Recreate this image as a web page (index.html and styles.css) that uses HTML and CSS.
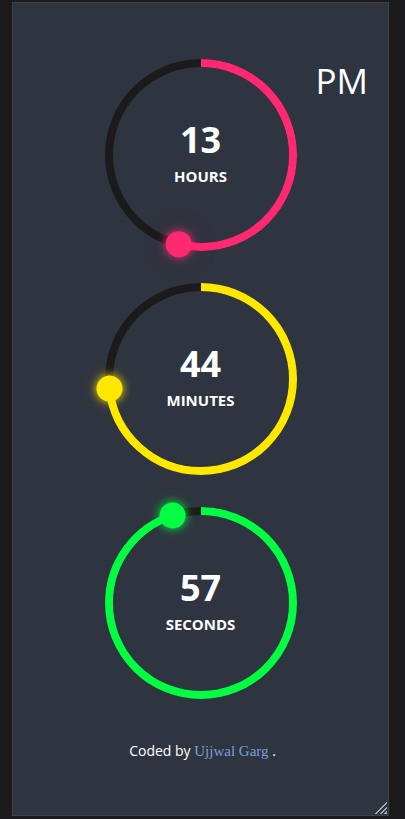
FILE: index.html
```html
<!DOCTYPE html>
<html lang="en">
<head>
<meta charset="utf-8">
<title>Clock</title>
<link rel="stylesheet" href="styles.css">
</head>
<body>
<div class="panel">
  <div class="ampm">PM</div>
  <div class="dial hours">
    <svg class="ring" viewBox="0 0 192 192" width="192" height="192">
      <circle class="track" cx="96" cy="96" r="92"></circle>
      <circle class="bar" cx="96" cy="96" r="92" style="stroke-dasharray: 311.5 578.05"></circle>
    </svg>
    <div class="dot-wrap" style="transform: rotate(194deg)"><span class="dot"></span></div>
    <div class="readout">
      <div class="num">13</div>
      <div class="label">HOURS</div>
    </div>
  </div>
  <div class="dial minutes">
    <svg class="ring" viewBox="0 0 192 192" width="192" height="192">
      <circle class="track" cx="96" cy="96" r="92"></circle>
      <circle class="bar" cx="96" cy="96" r="92" style="stroke-dasharray: 423.9 578.05"></circle>
    </svg>
    <div class="dot-wrap" style="transform: rotate(264deg)"><span class="dot"></span></div>
    <div class="readout">
      <div class="num">44</div>
      <div class="label">MINUTES</div>
    </div>
  </div>
  <div class="dial seconds">
    <svg class="ring" viewBox="0 0 192 192" width="192" height="192">
      <circle class="track" cx="96" cy="96" r="92"></circle>
      <circle class="bar" cx="96" cy="96" r="92" style="stroke-dasharray: 549.1 578.05"></circle>
    </svg>
    <div class="dot-wrap" style="transform: rotate(342deg)"><span class="dot"></span></div>
    <div class="readout">
      <div class="num">57</div>
      <div class="label">SECONDS</div>
    </div>
  </div>
  <p class="credit">Coded by <a href="#">Ujjwal Garg</a> .</p>
  <span class="grip"></span>
</div>
</body>
</html>
```

FILE: styles.css
```css
html, body {
  margin: 0;
  padding: 0;
  background: #1b1b1d;
}

body {
  padding: 2px 0 0 12px;
  font-family: "Open Sans", "Noto Sans", sans-serif;
  color: #ffffff;
}

.panel {
  position: relative;
  box-sizing: border-box;
  width: 377px;
  height: 814px;
  background: #2f3540;
  border: 1px solid #3d4148;
  overflow: hidden;
  display: flex;
  flex-direction: column;
  align-items: center;
  padding-top: 56px;
  gap: 32px;
}

.grip {
  position: absolute;
  right: 1px;
  bottom: 1px;
  width: 13px;
  height: 13px;
  background: linear-gradient(135deg,
    transparent 0 52%,
    #a9abb0 52% 60%,
    transparent 60% 70%,
    #a9abb0 70% 78%,
    transparent 78% 88%,
    #a9abb0 88% 100%);
}

.ampm {
  position: absolute;
  top: 56px;
  right: 20px;
  font-size: 35px;
  line-height: 44px;
  font-weight: 400;
  color: #ffffff;
}

.dial {
  position: relative;
  width: 192px;
  height: 192px;
  flex: none;
}

.hours { --clr: #ff2972; --glow: rgba(255, 41, 114, 0.10); }
.minutes { --clr: #fee800; --glow: rgba(254, 232, 0, 0.08); }
.seconds { --clr: #04fc43; --glow: rgba(4, 252, 67, 0.08); }

.ring {
  display: block;
  transform: rotate(-90deg);
}

.track {
  fill: none;
  stroke: #1b1b1b;
  stroke-width: 8;
}

.bar {
  fill: none;
  stroke: var(--clr);
  stroke-width: 8;
}

.dot-wrap {
  position: absolute;
  inset: 0;
}

.dot {
  position: absolute;
  left: 83px;
  top: -9px;
  width: 26px;
  height: 26px;
  border-radius: 50%;
  background: var(--clr);
  box-shadow: 0 0 10px var(--clr), 0 0 36px var(--glow), 0 0 80px var(--glow);
}

.readout {
  position: absolute;
  inset: 0;
  display: flex;
  flex-direction: column;
  align-items: center;
  justify-content: center;
  padding-bottom: 4px;
  box-sizing: border-box;
}

.num {
  font-size: 36px;
  font-weight: 700;
  line-height: 40px;
}

.label {
  margin-top: 6px;
  font-size: 15px;
  font-weight: 700;
  line-height: 20px;
}

.credit {
  margin: 10px 0 0;
  padding-left: 4px;
  font-size: 14px;
  line-height: 20px;
  color: #ffffff;
}

.credit a {
  font-family: "Liberation Serif", serif;
  font-size: 15px;
  color: #7a9fd9;
  text-decoration: none;
}
```
